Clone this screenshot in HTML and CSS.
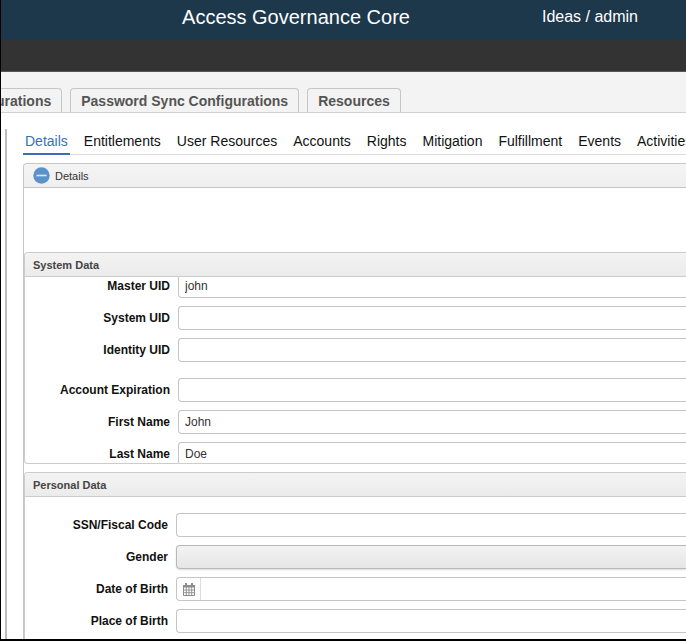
FILE: index.html
```
<!DOCTYPE html>
<html lang="en">
<head>
<meta charset="utf-8">
<title>Access Governance Core</title>
<link rel="stylesheet" href="styles.css">
</head>
<body>
<div class="app">
  <header class="topbar">
    <h1 class="title">Access Governance Core</h1>
    <span class="account">Ideas / admin</span>
  </header>
  <div class="toolbar"></div>
  <nav class="main-tabs">
    <a class="main-tab main-tab-first" href="#sync">urations</a>
    <a class="main-tab" href="#password">Password Sync Configurations</a>
    <a class="main-tab" href="#resources">Resources</a>
  </nav>
  <main class="content">
    <nav class="sub-tabs">
      <a class="sub-tab active" href="#details">Details</a>
      <a class="sub-tab" href="#entitlements">Entitlements</a>
      <a class="sub-tab" href="#user-resources">User Resources</a>
      <a class="sub-tab" href="#accounts">Accounts</a>
      <a class="sub-tab" href="#rights">Rights</a>
      <a class="sub-tab" href="#mitigation">Mitigation</a>
      <a class="sub-tab" href="#fulfillment">Fulfillment</a>
      <a class="sub-tab" href="#events">Events</a>
      <a class="sub-tab" href="#activities">Activities</a>
    </nav>
    <div class="details">
      <button class="details-head" type="button">
        <svg class="collapse" viewBox="0 0 17 17" aria-hidden="true"><circle cx="8.5" cy="8.5" r="8.2" fill="#5b92c9"/><path d="M3.5 8.5h10" stroke="#dce9f5" stroke-width="1.6"/></svg>
        Details
      </button>
      <div class="details-body">
        <section class="panel">
          <h2 class="panel-head">System Data</h2>
          <div class="scroller">
            <div class="fields scrolled">
              <div class="row"><label for="master">Master UID</label><input id="master" type="text" value="john"></div>
              <div class="row"><label for="system">System UID</label><input id="system" type="text"></div>
              <div class="row"><label for="identity">Identity UID</label><input id="identity" type="text"></div>
              <div class="row group-start"><label for="expiration">Account Expiration</label><input id="expiration" type="text"></div>
              <div class="row"><label for="first">First Name</label><input id="first" type="text" value="John"></div>
              <div class="row"><label for="last">Last Name</label><input id="last" type="text" value="Doe"></div>
            </div>
          </div>
        </section>
        <section class="panel personal">
          <h2 class="panel-head">Personal Data</h2>
          <div class="fields">
            <div class="row"><label for="ssn">SSN/Fiscal Code</label><input id="ssn" type="text"></div>
            <div class="row"><label for="gender">Gender</label><select id="gender"><option></option></select></div>
            <div class="row"><label for="birth">Date of Birth</label>
              <div class="date">
                <button class="date-button" type="button" aria-label="Choose date">
                  <svg viewBox="0 0 12 13" aria-hidden="true"><path d="M0.5 3h11v9.5h-11z" fill="#fff" stroke="#8c8c8c"/><path d="M0 2h12v2.5H0zM2 0h2v3H2zM8 0h2v3H8z" fill="#8c8c8c"/><path d="M3.3 4v8.5M6 4v8.5M8.7 4v8.5M0.5 7h11M0.5 9.7h11" stroke="#8c8c8c" stroke-width="0.9"/></svg>
                </button>
                <input id="birth" type="text">
              </div>
            </div>
            <div class="row"><label for="place">Place of Birth</label><input id="place" type="text"></div>
          </div>
        </section>
      </div>
    </div>
  </main>
</div>
</body>
</html>
```
FILE: styles.css
```
* { box-sizing: border-box; }

body {
  margin: 0;
  background: #fff;
  color: #111;
  font-family: "Liberation Sans", Arial, sans-serif;
}

.app {
  display: flex;
  flex-direction: column;
  height: 100vh;
  overflow: hidden;
  border-left: 1px solid #000;
  border-bottom: 2px solid #000;
}

.topbar {
  display: flex;
  flex: none;
  align-items: center;
  justify-content: flex-end;
  gap: 132px;
  height: 40px;
  padding: 0 48px 6px 0;
  background: #1d374b;
  color: #fff;
  white-space: nowrap;
}

.title { margin: 0; font-size: 20px; font-weight: 400; }
.account { font-size: 16px; }

.toolbar {
  flex: none;
  height: 32px;
  background: #333;
  border-bottom: 1px solid #555;
}

.main-tabs {
  display: flex;
  flex: none;
  align-items: flex-end;
  gap: 8px;
  height: 41px;
  background: #f3f3f3;
  border-bottom: 1px solid #d2d2d2;
  white-space: nowrap;
}

.main-tab {
  height: 24px;
  padding: 0 10px;
  border: 1px solid #c6c6c6;
  border-bottom: 0;
  border-radius: 4px 4px 0 0;
  color: #555;
  font-size: 14px;
  font-weight: 700;
  line-height: 24px;
  text-decoration: none;
}

.main-tab-first { margin-left: -6px; padding-left: 0; }

.content {
  flex: 1;
  min-height: 0;
  margin: 16px 0 0 4px;
  padding-left: 16px;
  border-left: 2px solid #bdbdbd;
}

.sub-tabs {
  display: flex;
  gap: 12px;
  height: 26px;
  border-bottom: 1px solid #dcdcdc;
  white-space: nowrap;
}

.sub-tab {
  height: 26px;
  padding: 0 2px;
  color: #111;
  font-size: 14px;
  line-height: 24px;
  text-decoration: none;
}

.sub-tab.active { color: #3a6fb5; border-bottom: 2px solid #3a6fb5; }

.details {
  margin-top: 8px;
  border: 1px solid #c8c8c8;
  border-right: 0;
  border-radius: 4px 0 0 0;
}

.details-head {
  display: flex;
  align-items: center;
  gap: 5px;
  width: 100%;
  height: 24px;
  padding: 0 9px;
  border: 0;
  border-bottom: 1px solid #c4c4c4;
  border-radius: 4px 0 0 0;
  background: linear-gradient(#f4f4f4, #efefef);
  color: #333;
  font: 11px "Liberation Sans", Arial, sans-serif;
}

.collapse { width: 17px; height: 17px; }

.details-body { padding-top: 64px; background: #fff; }

.panel {
  border: 1px solid #ccc;
  border-right: 0;
  border-radius: 4px 0 0 4px;
}

.panel-head {
  height: 24px;
  margin: 0;
  padding: 0 8px;
  border-bottom: 1px solid #ccc;
  border-radius: 4px 0 0 0;
  background: linear-gradient(#f3f3f3, #ebebeb);
  color: #444;
  font-size: 11px;
  font-weight: 700;
  line-height: 24px;
}

.scroller { height: 186px; overflow: hidden; }

.fields {
  display: flex;
  flex-direction: column;
  gap: 8px;
  padding: 16px 0;
}

.fields.scrolled { margin-top: -3px; padding: 0; }

.row {
  display: grid;
  grid-template-columns: 145px 1fr;
  align-items: center;
  column-gap: 8px;
  height: 24px;
}

.personal { margin-top: 8px; }
.personal .row { grid-template-columns: 143px 1fr; }
.group-start { margin-top: 8px; }

label {
  font-size: 12px;
  font-weight: 700;
  text-align: right;
}

input,
select,
.date {
  width: 100%;
  height: 24px;
  padding: 0 6px;
  border: 1px solid #c4c4c4;
  border-right: 0;
  border-radius: 4px 0 0 4px;
  background: #fff;
  color: #333;
  font: 12px "Liberation Sans", Arial, sans-serif;
}

select {
  appearance: none;
  border-color: #b8b8b8;
  background: linear-gradient(#f3f3f3, #e6e6e6);
  box-shadow: 0 1px 2px #ddd;
}

.date { display: flex; padding: 0; }
.date input { height: 22px; border: 0; }

.date-button {
  display: flex;
  flex: none;
  align-items: center;
  justify-content: center;
  width: 24px;
  height: 22px;
  padding: 0;
  border: 0;
  border-right: 1px solid #ddd;
  border-radius: 4px 0 0 4px;
  background: #fff;
}

.date-button svg { width: 12px; height: 13px; }
```
